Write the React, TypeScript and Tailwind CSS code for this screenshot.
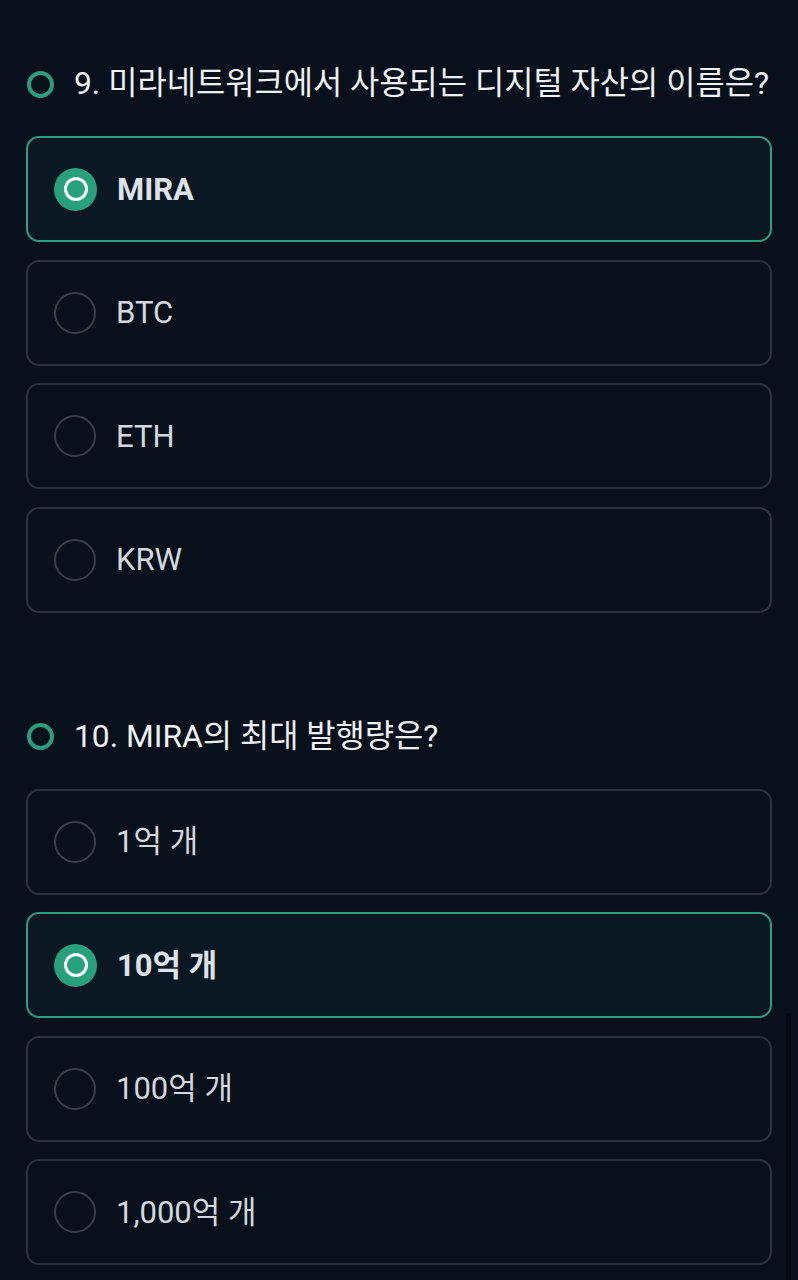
import React from "react";

type Opt = { label: string; selected?: boolean };

const questions: { title: string; options: Opt[] }[] = [
  {
    title: "9. 미라네트워크에서 사용되는 디지털 자산의 이름은?",
    options: [{ label: "MIRA", selected: true }, { label: "BTC" }, { label: "ETH" }, { label: "KRW" }],
  },
  {
    title: "10. MIRA의 최대 발행량은?",
    options: [{ label: "1억 개" }, { label: "10억 개", selected: true }, { label: "100억 개" }, { label: "1,000억 개" }],
  },
];

const font = { fontFamily: "Roboto, 'Noto Sans CJK KR', 'Noto Sans', sans-serif" };

function Option({ o }: { o: Opt }) {
  return (
    <div
      className={
        o.selected
          ? "flex h-[106px] items-center gap-[20px] rounded-[13px] border-2 border-[#2a9e7d] bg-[#0b1722] pl-[26px]"
          : "flex h-[106px] items-center gap-[20px] rounded-[13px] border-2 border-[#29323e] bg-[#08101b] pl-[26px]"
      }
    >
      {o.selected ? (
        <div className="flex h-[43px] w-[43px] items-center justify-center rounded-full bg-[#27a07c]">
          <div className="h-[24px] w-[24px] rounded-full border-[3px] border-white" />
        </div>
      ) : (
        <div className="h-[42px] w-[42px] rounded-full border-[2.5px] border-[#363f4b]" />
      )}
      <span
        className={
          o.selected
            ? "text-[31px] font-bold leading-none text-[#dde2e9]"
            : "text-[31px] font-normal leading-none text-[#d3d8df]"
        }
      >
        {o.label}
      </span>
    </div>
  );
}

export default function App() {
  return (
    <div className="relative min-h-[1280px] bg-[#08101b] px-[26px] pt-[62px]" style={font}>
      <div className="flex flex-col gap-[102px]">
        {questions.map((q) => (
          <div key={q.title} className="flex flex-col">
            <div className="flex h-[44px] items-center gap-[20px] pl-[1px]">
              <div className="h-[27px] w-[27px] shrink-0 rounded-full border-[4px] border-[#2a9e7d]" />
              <span className="whitespace-nowrap text-[31.8px] leading-none text-[#eef0f3]">{q.title}</span>
            </div>
            <div className="mt-[30px] flex flex-col gap-[17.5px]">
              {q.options.map((o) => (
                <Option key={o.label} o={o} />
              ))}
            </div>
          </div>
        ))}
      </div>
      <div className="absolute right-[7px] top-[1013px] h-[267px] w-[5px] bg-[#050b13]" />
    </div>
  );
}
